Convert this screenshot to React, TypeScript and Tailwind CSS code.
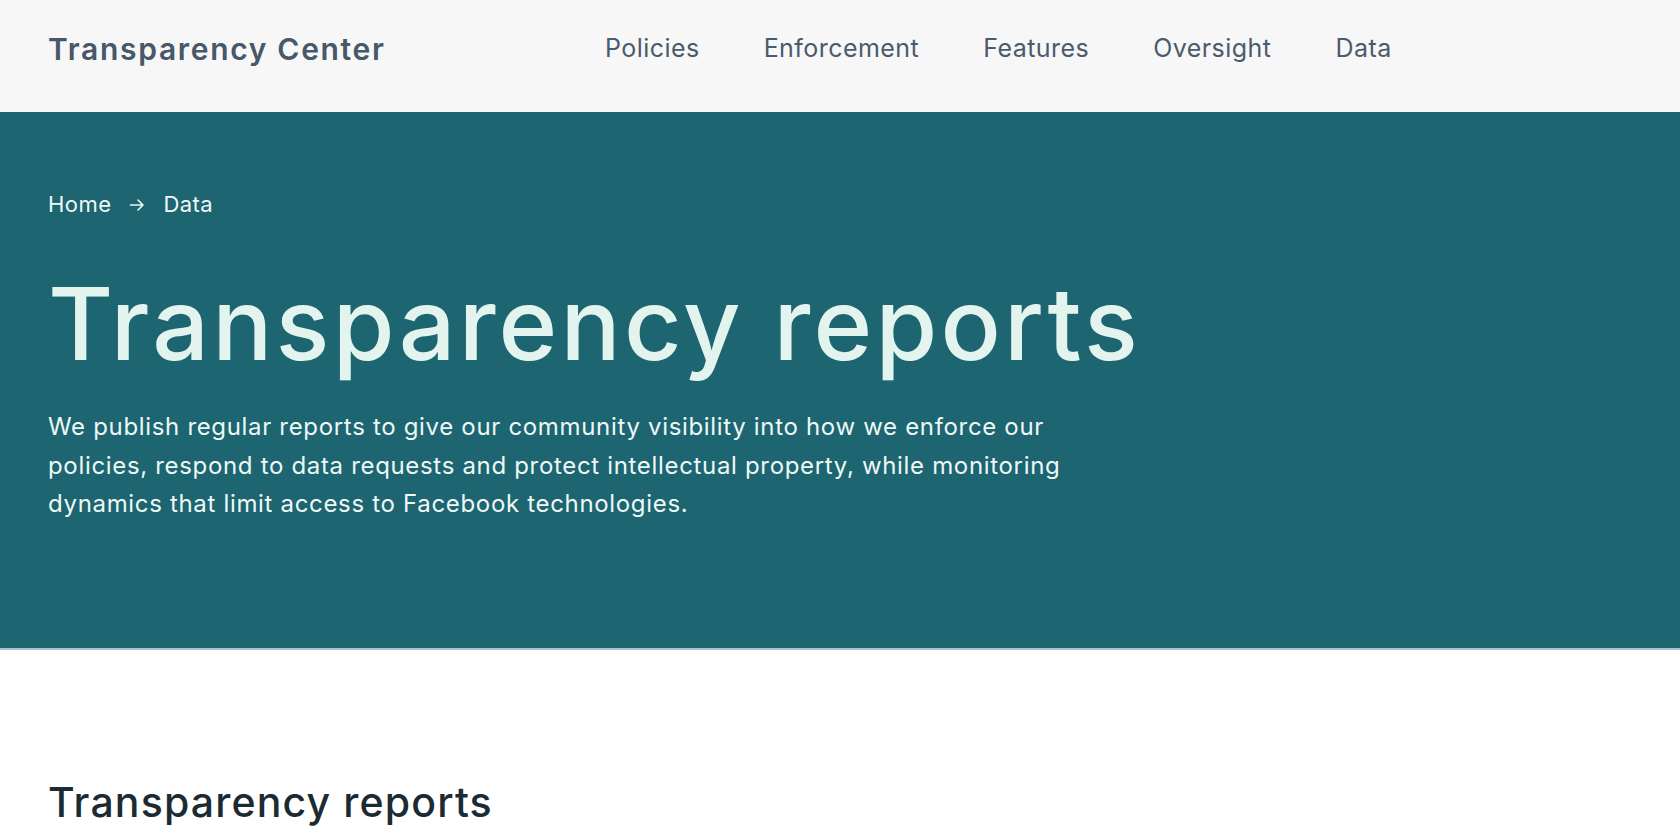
import React from 'react';

const navItems = ['Policies', 'Enforcement', 'Features', 'Oversight', 'Data'];

const ArrowRight: React.FC = () => (
  <svg width="18" height="18" viewBox="0 0 18 18" fill="none" className="mx-[17px]">
    <path d="M2.5 9h12.5M10 4l5 5-5 5" stroke="currentColor" strokeWidth="1.6" strokeLinecap="round" strokeLinejoin="round" />
  </svg>
);

const App: React.FC = () => {
  return (
    <div className="min-h-screen bg-white font-['Inter',sans-serif]">
      {/* top bar */}
      <header className="h-[112px] bg-[#f7f7f7] flex items-center px-[48px] pb-[14px]">
        <div className="w-[557px] text-[30px] font-semibold tracking-[0.056em] text-[#465869]">
          Transparency Center
        </div>
        <nav className="flex items-center gap-[64px] text-[25px] tracking-[0.018em] text-[#4b5b6c]">
          {navItems.map((item) => (
            <a key={item} href="#" className="hover:underline">
              {item}
            </a>
          ))}
        </nav>
      </header>

      {/* hero */}
      <section className="h-[538px] bg-[#1c6571] border-b-2 border-[#9ccbd0] px-[48px] pt-[76px]">
        <div className="flex items-center text-[22px] tracking-[0.02em] text-[#eef8f6]">
          <span>Home</span>
          <ArrowRight />
          <span>Data</span>
        </div>
        <h1 className="mt-[48px] text-[100px] leading-[110px] font-medium tracking-[0.032em] text-[#e3f4ef]">
          Transparency reports
        </h1>
        <p className="mt-[29px] text-[24px] leading-[38.5px] tracking-[0.028em] text-[#eef8f6]">
          We publish regular reports to give our community visibility into how we enforce our
          <br />
          policies, respond to data requests and protect intellectual property, while monitoring
          <br />
          dynamics that limit access to Facebook technologies.
        </p>
      </section>

      {/* reports */}
      <section className="px-[48px] pt-[128px]">
        <h2 className="text-[41px] leading-[48px] font-medium tracking-[0.028em] text-[#1c2b33]">
          Transparency reports
        </h2>
      </section>
    </div>
  );
};

export default App;
